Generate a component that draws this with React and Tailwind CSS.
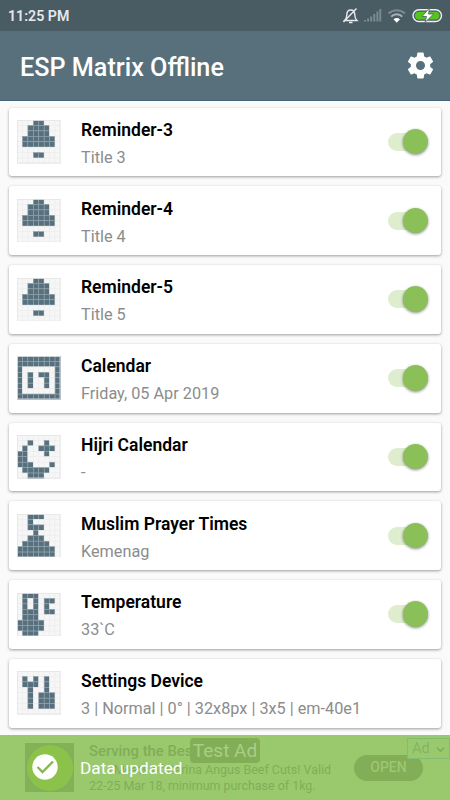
import React from 'react';

const BELL = [
  '...##...',
  '..####..',
  '..####..',
  '.######.',
  '.######.',
  '........',
  '...##...',
  '........',
];

const CALENDAR = [
  '########',
  '########',
  '#......#',
  '#.#.##.#',
  '#.#..#.#',
  '#.#..#.#',
  '#......#',
  '########',
];

const MOON = [
  '........',
  '..#..#..',
  '.#..###.',
  '##...#..',
  '##......',
  '###...#.',
  '.#####..',
  '..###...',
];

const MOSQUE = [
  '..###...',
  '..#.....',
  '..###...',
  '...#....',
  '..###...',
  '.#####..',
  '#######.',
  '#######.',
];

const THERMOMETER = [
  '.###....',
  '.#.#.##.',
  '.#.#.#..',
  '.###.##.',
  '.###....',
  '#####...',
  '#####...',
  '.###....',
];

const TOOLS = [
  '........',
  '.#.#.#..',
  '.###.#..',
  '..#..#..',
  '..#.###.',
  '..#.###.',
  '..#.###.',
  '........',
];

const items = [
  { title: 'Reminder-3', subtitle: 'Title 3', icon: BELL, enabled: true },
  { title: 'Reminder-4', subtitle: 'Title 4', icon: BELL, enabled: true },
  { title: 'Reminder-5', subtitle: 'Title 5', icon: BELL, enabled: true },
  { title: 'Calendar', subtitle: 'Friday, 05 Apr 2019', icon: CALENDAR, enabled: true },
  { title: 'Hijri Calendar', subtitle: '-', icon: MOON, enabled: true },
  { title: 'Muslim Prayer Times', subtitle: 'Kemenag', icon: MOSQUE, enabled: true },
  { title: 'Temperature', subtitle: '33`C', icon: THERMOMETER, enabled: true },
  { title: 'Settings Device', subtitle: '3 | Normal | 0° | 32x8px | 3x5 | em-40e1', icon: TOOLS },
];

const MatrixIcon = ({ rows }) => (
  <svg viewBox="0 0 64 64" className="h-[43.5px] w-[43.5px] shrink-0">
    <rect width="64" height="64" fill="#f5f5f5" />
    {rows.map((row, y) =>
      row.split('').map((cell, x) => (
        <rect
          key={`${x}-${y}`}
          x={x * 8}
          y={y * 8}
          width="8"
          height="8"
          fill={cell === '#' ? '#56707d' : '#f6f6f6'}
          stroke={cell === '#' ? '#93a3ab' : '#eeeeee'}
          strokeWidth="0.9"
        />
      ))
    )}
    <rect x="0.75" y="0.75" width="62.5" height="62.5" fill="none" stroke="#e6e6e6" strokeWidth="1.2" />
  </svg>
);

const Toggle = () => (
  <div className="relative ml-auto mr-[14px] h-[18px] w-[39px] shrink-0 rounded-full bg-[#deedcd]">
    <div className="absolute -right-px -top-[4px] h-[25.5px] w-[25.5px] rounded-full bg-[#8bc058] shadow-[0_1px_3px_rgba(0,0,0,0.45)]" />
  </div>
);

const ItemCard = ({ title, subtitle, icon, enabled }) => (
  <div className="flex h-[68.75px] items-center rounded-[3px] bg-white pl-[8px] shadow-[0_1px_3px_rgba(0,0,0,0.38)]">
    <MatrixIcon rows={icon} />
    <div className="ml-[20.5px] whitespace-nowrap pt-[4px]">
      <h2 className="text-[17.5px] leading-[28px] font-semibold text-black">{title}</h2>
      <p className="text-[16.25px] leading-[28px] text-[#8c8c8c]">{subtitle}</p>
    </div>
    {enabled && <Toggle />}
  </div>
);

const StatusBar = () => (
  <div className="flex h-[31px] items-center bg-[#495b63] pl-[8px] pr-[8px] pt-px">
    <span className="pt-px text-[14.2px] font-semibold text-[#e7eaec]">11:25 PM</span>
    <svg viewBox="0 0 110 24" className="ml-auto h-6 w-[110px] overflow-visible" fill="none">
      {/* muted bell */}
      <path
        d="M12.500 16.500h12.500c-1.700-1.600-2.200-3-2.200-5.500 0-3.300-1.300-5-4-5s-4 1.700-4 5c0 2.500-.5 3.900-2.300 5.500zM17 18.500h3.500M11.500 18L24.500 4.500"
        stroke="#e7eaec"
        strokeWidth="1.4"
      />
      <path
        d="M33 16v1.500M36.100 14.500v3M39.200 12.500v5M42.300 10v7.500M45.400 7.500v10M48.300 5v12.500"
        stroke="#7b8a91"
        strokeWidth="2"
      />
      {/* wifi */}
      <path d="M56.500 9.500a11.800 11.800 0 0 1 16.500 0" stroke="#7b8a91" strokeWidth="2" />
      <path d="M59.200 12.600a8 8 0 0 1 11.100 0" stroke="#a9b3b8" strokeWidth="2" />
      <path d="M61.500 15.300a5 5 0 0 1 6.500 0L64.750 18.700z" fill="#fff" />
      {/* charging battery */}
      <rect x="81" y="5.700" width="28.500" height="11.800" rx="5.900" stroke="#edf0f1" strokeWidth="1.4" />
      <rect x="83" y="7.700" width="24.500" height="7.800" rx="3.900" fill="#55c51b" />
      <path d="M97.500 4l-7.500 8.500h4.500l-1.500 6 8.500-8.500h-5z" fill="#fff" stroke="#495b63" strokeWidth="0.8" />
    </svg>
  </div>
);

const Header = () => (
  <header className="flex h-[70px] items-center border-b border-[#426476] bg-[#58707c] pl-5 pr-[14.5px]">
    <h1 className="pt-[5px] text-[25.2px] font-medium text-white">ESP Matrix Offline</h1>
    <svg viewBox="0 0 24 24" className="ml-auto h-[31px] w-[31px]" fill="#fff">
      <path d="M19.430 12.980c.04-.32.07-.64.07-.98s-.03-.66-.07-.98l2.110-1.650c.19-.15.24-.42.12-.64l-2-3.460c-.12-.22-.39-.3-.61-.22l-2.490 1c-.52-.4-1.080-.73-1.690-.98l-.38-2.650C14.460 2.180 14.250 2 14 2h-4c-.25 0-.46.18-.49.42l-.38 2.650c-.61.25-1.170.59-1.690.98l-2.490-1c-.23-.09-.49 0-.61.22l-2 3.460c-.13.22-.07.49.12.64l2.110 1.650c-.04.32-.07.65-.07.98s.03.66.07.98l-2.110 1.650c-.19.15-.24.42-.12.64l2 3.460c.12.22.39.3.61.22l2.490-1c.52.4 1.080.73 1.690.98l.38 2.650c.03.24.24.42.49.42h4c.25 0 .46-.18.49-.42l.38-2.650c.61-.25 1.170-.59 1.690-.98l2.490 1c.23.09.49 0 .61-.22l2-3.460c.12-.22.07-.49-.12-.64l-2.110-1.650zM12 15.500c-1.930 0-3.500-1.570-3.500-3.500s1.570-3.500 3.500-3.500 3.500 1.570 3.500 3.500-1.570 3.500-3.500 3.500z" />
    </svg>
  </header>
);

const AdBanner = () => (
  <div className="flex h-full items-center pl-[25px] text-[#80ad57]">
    <div className="h-[49px] w-[49px] shrink-0 bg-[#83b058]" />
    <div className="ml-[15px] w-[265px] whitespace-nowrap">
      <p className="text-[14.8px] leading-[19px] font-medium">Serving the Best</p>
      <p className="w-[242px] text-right text-[12.45px] leading-[17px]">Meats of Carina Angus Beef Cuts! Valid</p>
      <p className="text-[12.45px] leading-4">22-25 Mar 18, minimum purchase of 1kg.</p>
    </div>
    <div className="flex h-[26px] w-[69px] items-center justify-center rounded-full bg-[#82ae57] text-[14px] font-medium text-[#9cc772]">
      OPEN
    </div>
  </div>
);

const Toast = () => (
  <div className="absolute inset-x-0 bottom-0 h-[65px] overflow-hidden bg-[#9ac96d]">
    <AdBanner />
    <div className="absolute left-[190px] top-[3px] flex h-[25px] w-[70px] items-center justify-center rounded-[4px] bg-[#82ae57] pt-px text-[19px] whitespace-nowrap text-[#a9cf85]">
      Test Ad
    </div>
    <div className="absolute right-0 top-[3px] flex h-[21px] w-[43px] items-center gap-1 border border-[#82bd78] bg-[#9ac96d] pt-px pl-1 text-[14.5px] text-[#80b46a]">
      Ad
      <svg viewBox="0 0 10 10" className="ml-[2px] h-[9px] w-[9px]" fill="none" stroke="#76ad5c" strokeWidth="1.5">
        <path d="M1 3l4 4 4-4" />
      </svg>
    </div>
    <div className="absolute left-[27px] top-[10px] flex h-[46px] w-[46px] items-center justify-center rounded-full bg-[#8bc34a]">
      <svg viewBox="0 0 26 26" className="mr-[10px] mb-[2px] h-[26px] w-[26px]">
        <circle cx="13" cy="13" r="12.7" fill="#fff" />
        <path d="M5.500 13l5 5L21 7.500" fill="none" stroke="#83b84d" strokeWidth="2.300" />
      </svg>
    </div>
    <span className="absolute left-[80px] top-[20px] text-[17.2px] leading-[26px] text-white">Data updated</span>
  </div>
);

export default function App() {
  return (
    <div className="relative h-[800px] w-[450px] overflow-hidden bg-[#fafafa] font-['Roboto',sans-serif]">
      <StatusBar />
      <Header />
      <main className="flex flex-col gap-[10px] px-[9px] pt-[6.5px]">
        {items.map((item) => (
          <ItemCard key={item.title} {...item} />
        ))}
      </main>
      <Toast />
    </div>
  );
}
